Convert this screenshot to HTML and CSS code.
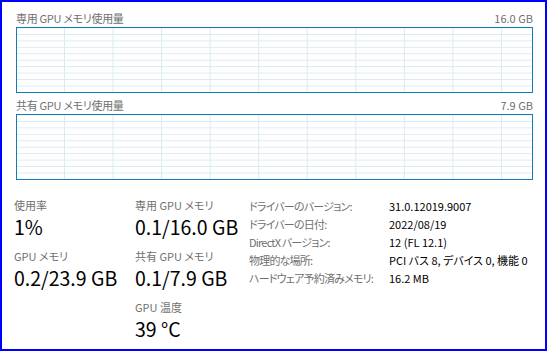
FILE: index.html
```html
<!DOCTYPE html>
<html lang="ja">

<head>
    <meta charset="UTF-8">
    <meta name="viewport" content="width=device-width, initial-scale=1.0">
    <title>GPU</title>
    <link rel="stylesheet" href="styles.css">
</head>

<body>

    <div class="janela">
        <section class="grafico">
            <div class="grafico-topo">
                <span class="titulo">専用 GPU メモリ使用量</span>
                <span>16.0 GB</span>
            </div>
            <div class="chart"></div>
        </section>

        <section class="grafico">
            <div class="grafico-topo">
                <span class="titulo">共有 GPU メモリ使用量</span>
                <span>7.9 GB</span>
            </div>
            <div class="chart"></div>
        </section>

        <div class="stats">
            <div class="coluna">
                <div class="stat">
                    <div class="stat-label">使用率</div>
                    <div class="stat-valor">1%</div>
                </div>
                <div class="stat">
                    <div class="stat-label">GPU メモリ</div>
                    <div class="stat-valor">0.2/23.9 GB</div>
                </div>
            </div>
            <div class="coluna">
                <div class="stat">
                    <div class="stat-label">専用 GPU メモリ</div>
                    <div class="stat-valor">0.1/16.0 GB</div>
                </div>
                <div class="stat">
                    <div class="stat-label">共有 GPU メモリ</div>
                    <div class="stat-valor">0.1/7.9 GB</div>
                </div>
                <div class="stat">
                    <div class="stat-label">GPU 温度</div>
                    <div class="stat-valor">39 °C</div>
                </div>
            </div>
            <dl class="detalhes">
                <dt>ドライバーのバージョン:</dt>
                <dd>31.0.12019.9007</dd>
                <dt>ドライバーの日付:</dt>
                <dd>2022/08/19</dd>
                <dt>DirectX バージョン:</dt>
                <dd>12 (FL 12.1)</dd>
                <dt>物理的な場所:</dt>
                <dd>PCI バス 8, デバイス 0, 機能 0</dd>
                <dt>ハードウェア予約済みメモリ:</dt>
                <dd>16.2 MB</dd>
            </dl>
        </div>
    </div>

</body>

</html>
```

FILE: styles.css
```css
* {
    box-sizing: border-box;
    margin: 0;
    padding: 0;
}

body {
    font-family: "Noto Sans CJK JP", sans-serif;
    font-feature-settings: "palt";
    background: #fff;
}

.janela {
    width: 547px;
    height: 351px;
    border: 2px solid #0000ff;
    padding: 8px 12px 0 14px;
}

.grafico+.grafico {
    margin-top: 4px;
}

.grafico-topo {
    display: flex;
    justify-content: space-between;
    font-size: 11px;
    line-height: 17px;
    color: #707070;
}

.grafico-topo .titulo {
    letter-spacing: -0.3px;
}

.chart {
    height: 66px;
    border: 1px solid #117dbb;
    background-image:
        linear-gradient(to right, #d9eaf4 1px, transparent 1px),
        linear-gradient(to bottom, #d9eaf4 1px, transparent 1px);
    background-size: 48.56px 100%, 100% 6.45px;
    background-position: 47px 0, 0 6px;
}

.stats {
    display: flex;
    align-items: flex-start;
    margin: 17px 0 0 -2px;
    white-space: nowrap;
}

.coluna:nth-child(1) {
    width: 121px;
}

.coluna:nth-child(2) {
    width: 114px;
}

.stat {
    height: 51px;
}

.stat-label {
    font-size: 11px;
    line-height: 16px;
    color: #707070;
}

.stat-valor {
    font-size: 19.5px;
    line-height: 28px;
    color: #000;
}

.detalhes {
    display: grid;
    grid-template-columns: 140px auto;
    font-size: 11px;
    line-height: 18px;
}

.detalhes dt {
    color: #707070;
    letter-spacing: -0.8px;
}

.detalhes dd {
    color: #000;
}
```
